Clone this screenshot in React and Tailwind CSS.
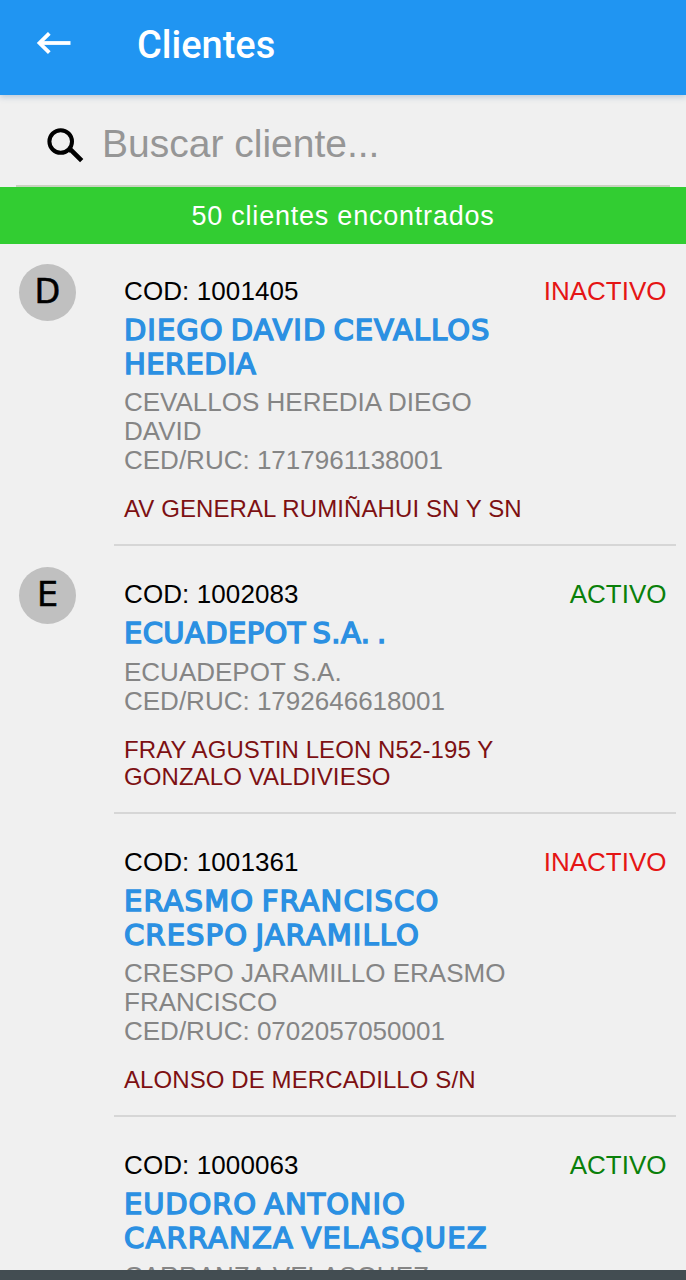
import React from 'react';

const clients = [
  {
    initial: 'D',
    code: '1001405',
    active: false,
    name: [['DIEGO DAVID CEVALLOS', 'tracking-[1px]'], ['HEREDIA', 'tracking-[0.4px]']],
    legal: ['CEVALLOS HEREDIA DIEGO', 'DAVID'],
    ruc: '1717961138001',
    address: ['AV GENERAL RUMIÑAHUI SN Y SN'],
  },
  {
    initial: 'E',
    code: '1002083',
    active: true,
    name: [['ECUADEPOT S.A. .', 'tracking-[0.4px]']],
    legal: ['ECUADEPOT S.A.'],
    ruc: '1792646618001',
    address: ['FRAY AGUSTIN LEON N52-195 Y', 'GONZALO VALDIVIESO'],
  },
  {
    code: '1001361',
    active: false,
    name: [['ERASMO FRANCISCO', 'tracking-[1.15px]'], ['CRESPO JARAMILLO', 'tracking-[1.12px]']],
    legal: ['CRESPO JARAMILLO ERASMO', 'FRANCISCO'],
    ruc: '0702057050001',
    address: ['ALONSO DE MERCADILLO S/N'],
  },
  {
    code: '1000063',
    active: true,
    name: [['EUDORO ANTONIO', 'tracking-[0.9px]'], ['CARRANZA VELASQUEZ', 'tracking-[1.2px]']],
    legal: ['CARRANZA VELASQUEZ'],
    address: [],
  },
];

function Client({ client }) {
  return (
    <li className="flex shrink-0 pr-[10px]">
      <div className="w-[114px] shrink-0 pt-[21px] pl-[19px]">
        {client.initial && (
          <div className="flex size-[57px] items-center justify-center rounded-full bg-[#c0c0c0] pb-[2px] font-['DejaVu_Sans',sans-serif] text-[33.5px] leading-none text-black [-webkit-text-stroke:0.5px_#000]">
            {client.initial}
          </div>
        )}
      </div>
      <div className="flex-1 border-b-2 border-[#d6d6d6] pt-[33.6px] pr-[9.5px] pb-[22px] pl-[10px] whitespace-nowrap">
        <div className="flex justify-between text-[26px] leading-[29.5px]">
          <span className="tracking-[0.1px] text-black">COD: {client.code}</span>
          <span className={client.active ? 'text-[#0a800a]' : 'text-[#e51515]'}>
            {client.active ? 'ACTIVO' : 'INACTIVO'}
          </span>
        </div>
        <div className="mt-[8px] font-['DejaVu_Sans',sans-serif] text-[29px] leading-[33.5px] [word-spacing:-3px] text-[#2b90e2] [-webkit-text-stroke:1.5px_#2b90e2]">
          {client.name.map(([text, tracking]) => (
            <div key={text}><span className={tracking}>{text}</span></div>
          ))}
        </div>
        <div className="mt-[6.8px] text-[26px] leading-[29.3px] text-[#858585]">
          {client.legal.map((text) => (
            <div key={text}>{text}</div>
          ))}
          {client.ruc && <div>CED/RUC: {client.ruc}</div>}
        </div>
        <div className="mt-[19.6px] text-[24px] leading-[27px] tracking-[0.09px] text-[#7d1013]">
          {client.address.map((text) => (
            <div key={text}>{text}</div>
          ))}
        </div>
      </div>
    </li>
  );
}

export default function App() {
  return (
    <div className="flex h-[1280px] w-[686px] flex-col overflow-hidden bg-[#f0f0f0] font-['Liberation_Sans',Arial,sans-serif]">
      <header className="z-10 flex h-[95px] shrink-0 items-center bg-[#2095f2] pb-[7px] pl-[36px] text-white shadow-[0_2px_6px_rgba(60,110,160,0.3)]">
        <svg className="h-[24px] w-[36px] shrink-0" viewBox="0 0 36 24" fill="none" stroke="currentColor" strokeWidth="3.8">
          <path d="M34.5 11H3.5" />
          <path d="M13.3 1.3L3.5 11L13.3 20.7" />
        </svg>
        <h1 className="mt-[2px] ml-[65px] font-[Roboto,sans-serif] text-[38px] leading-[44px] font-medium">Clientes</h1>
      </header>
      <div className="flex h-[92px] shrink-0 px-[16px]">
        <div className="flex flex-1 items-center border-b-2 border-[#c9d3c0] pt-[7px] pl-[31px]">
          <svg className="mt-[5px] size-[37px] shrink-0" viewBox="0 0 37 37" fill="none" stroke="#000">
            <circle cx="13.7" cy="13.5" r="11.3" strokeWidth="4" />
            <path d="M22 22.3L24.3 22.3L34.7 32.7" strokeWidth="4.6" />
          </svg>
          <span className="ml-[18px] text-[39px] leading-[44px] whitespace-nowrap text-[#969696]">Buscar cliente...</span>
        </div>
      </div>
      <div className="flex h-[57px] shrink-0 items-center justify-center bg-[#32cd32] pt-[2px] text-[27px] tracking-[0.78px] text-white">
        50 clientes encontrados
      </div>
      <ul className="-mt-[1px] flex min-h-0 flex-1 flex-col overflow-hidden">
        {clients.map((client) => (
          <Client key={client.code} client={client} />
        ))}
      </ul>
      <footer className="h-[10px] shrink-0 bg-[#434d52]" />
    </div>
  );
}
